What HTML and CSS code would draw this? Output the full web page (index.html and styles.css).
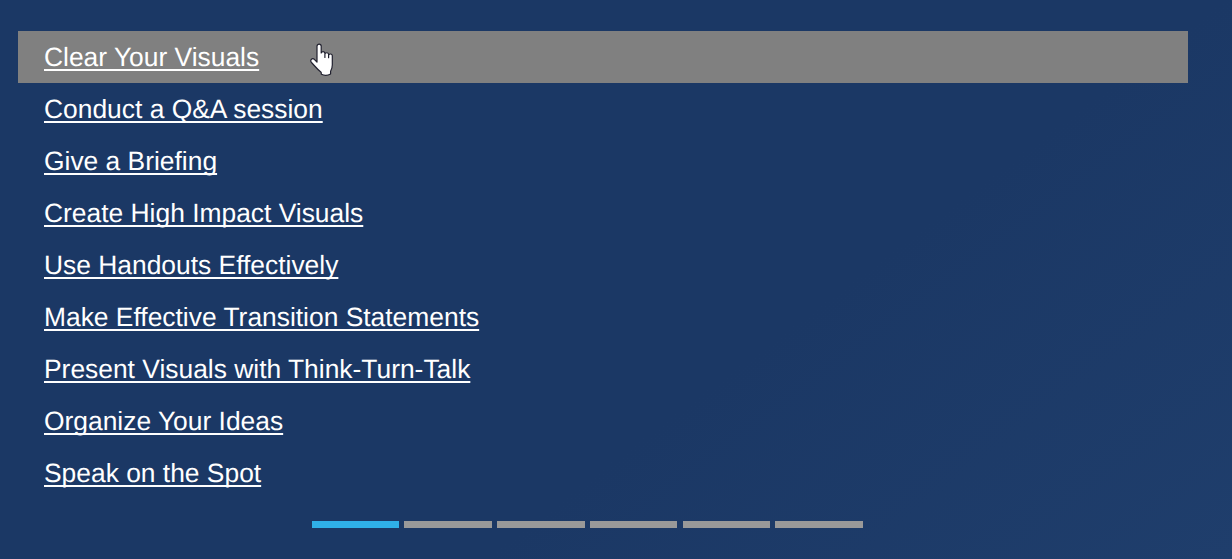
FILE: index.html
```
<!DOCTYPE html>
<html lang="en">
<head>
<meta charset="utf-8">
<title>Presentation skills</title>
<link rel="stylesheet" href="styles.css">
</head>
<body>
<main class="panel">
  <ul class="menu">
    <li class="item item-active"><a href="#">Clear Your Visuals</a>
      <svg class="cursor" width="26" height="34" viewBox="0 0 26 34" aria-hidden="true"><path d="M8 3.2a2.1 2.1 0 0 1 4.2 0V10a1.9 1.9 0 0 1 3.7 0v4.5V11.2a1.9 1.9 0 0 1 3.7 0v3.5V12.4a1.9 1.9 0 0 1 3.7 0.2V22c0 3-.9 4.8-1.7 6.2V31c-3 1.6-6.6 1.5-9.2.3l-.3-2.1C8.300 26.500 5.500 22.600 2.500 19.500 0.500 17.200 3.200 14.600 5.300 16.300L8 19z" fill="#fff" stroke="#20202e" stroke-width="1.2" stroke-linejoin="round"/></svg>
    </li>
    <li class="item"><a href="#">Conduct a Q&amp;A session</a></li>
    <li class="item"><a href="#">Give a Briefing</a></li>
    <li class="item"><a href="#">Create High Impact Visuals</a></li>
    <li class="item"><a href="#">Use Handouts Effectively</a></li>
    <li class="item"><a href="#">Make Effective Transition Statements</a></li>
    <li class="item"><a href="#">Present Visuals with Think-Turn-Talk</a></li>
    <li class="item"><a href="#">Organize Your Ideas</a></li>
    <li class="item"><a href="#">Speak on the Spot</a></li>
  </ul>
  <div class="pager">
    <span class="seg seg-active"></span>
    <span class="seg"></span>
    <span class="seg"></span>
    <span class="seg"></span>
    <span class="seg"></span>
    <span class="seg"></span>
  </div>
</main>
</body>
</html>
```
FILE: styles.css
```
* { box-sizing: border-box; }
html, body { margin: 0; height: 100%; }
body {
  background: linear-gradient(143deg, #1b3865 0%, #1b3865 62%, #1f3e6c 100%);
  font-family: "Liberation Sans", Arial, sans-serif;
  text-rendering: geometricPrecision;
  overflow: hidden;
}
.panel {
  padding: 31px 44px 0 18px;
  height: 559px;
}
.menu {
  list-style: none;
  margin: 0;
  padding: 0;
}
.item {
  position: relative;
  height: 52px;
  padding-left: 26px;
  line-height: 52px;
  font-size: 26.4px;
}
.item a {
  color: #fff;
  text-decoration: underline;
  text-decoration-thickness: 2px;
  text-decoration-skip-ink: none;
  text-underline-offset: 3px;
}
.item-active { background: #808080; }
.cursor {
  position: absolute;
  left: 291px;
  top: 12px;
}
.pager {
  display: flex;
  gap: 5.1px;
  width: 551.1px;
  margin: 22px 0 0 293.7px;
}
.seg {
  flex: 1;
  height: 7px;
  background: #999;
}
.seg-active { background: #2fb0e8; }
```
